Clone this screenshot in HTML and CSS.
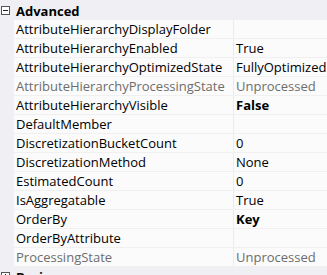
FILE: index.html
```html
<!DOCTYPE html>
<html lang="en">
<head>
    <meta charset="UTF-8">
    <title>Properties</title>
    <link rel="stylesheet" href="styles.css">
</head>
<body>
    <div class="grid">
        <div class="category">
            <span class="toggle minus"></span>
            <span class="cat-name">Advanced</span>
        </div>
        <div class="row"><span class="name">AttributeHierarchyDisplayFolder</span><span class="value"></span></div>
        <div class="row"><span class="name">AttributeHierarchyEnabled</span><span class="value">True</span></div>
        <div class="row"><span class="name">AttributeHierarchyOptimizedState</span><span class="value">FullyOptimized</span></div>
        <div class="row readonly"><span class="name">AttributeHierarchyProcessingState</span><span class="value">Unprocessed</span></div>
        <div class="row"><span class="name">AttributeHierarchyVisible</span><span class="value bold">False</span></div>
        <div class="row"><span class="name">DefaultMember</span><span class="value"></span></div>
        <div class="row"><span class="name">DiscretizationBucketCount</span><span class="value">0</span></div>
        <div class="row"><span class="name">DiscretizationMethod</span><span class="value">None</span></div>
        <div class="row"><span class="name">EstimatedCount</span><span class="value">0</span></div>
        <div class="row"><span class="name">IsAggregatable</span><span class="value">True</span></div>
        <div class="row"><span class="name">OrderBy</span><span class="value bold">Key</span></div>
        <div class="row"><span class="name">OrderByAttribute</span><span class="value"></span></div>
        <div class="row readonly"><span class="name">ProcessingState</span><span class="value">Unprocessed</span></div>
        <div class="category">
            <span class="toggle plus"></span>
            <span class="cat-name">Basic</span>
        </div>
    </div>
</body>
</html>
```

FILE: styles.css
```css
body {
    margin: 0;
    padding: 0;
    background-color: #f0f0f4;
    font-family: "Open Sans", "Noto Sans", Arial, sans-serif;
    font-size: 13px;
    color: #000;
}
.grid {
    width: 327px;
    padding-top: 1px;
    overflow: hidden;
}
.category {
    height: 19px;
    display: flex;
    align-items: center;
    background-color: #f0f0f4;
}
.cat-name {
    font-weight: bold;
    margin-left: 6px;
}
.toggle {
    width: 7px;
    height: 7px;
    border: 1px solid #555;
    margin-left: 1px;
    position: relative;
    background: #fff;
}
.toggle::before {
    content: "";
    position: absolute;
    left: 1px;
    top: 3px;
    width: 5px;
    height: 1px;
    background: #222;
}
.plus::after {
    content: "";
    position: absolute;
    left: 3px;
    top: 1px;
    width: 1px;
    height: 5px;
    background: #222;
}
.row {
    height: 19px;
    display: flex;
    margin-left: 14px;
    background-color: #fbfbfb;
    border-bottom: 1px solid #f0f0f0;
    box-sizing: border-box;
}
.name {
    width: 217px;
    padding-left: 2px;
    border-right: 1px solid #ececec;
    white-space: nowrap;
    overflow: hidden;
    line-height: 19px;
}
.value {
    flex: 1;
    padding-left: 2px;
    line-height: 19px;
    white-space: nowrap;
}
.bold {
    font-weight: bold;
}
.readonly {
    color: #6d6d6d;
}
```
